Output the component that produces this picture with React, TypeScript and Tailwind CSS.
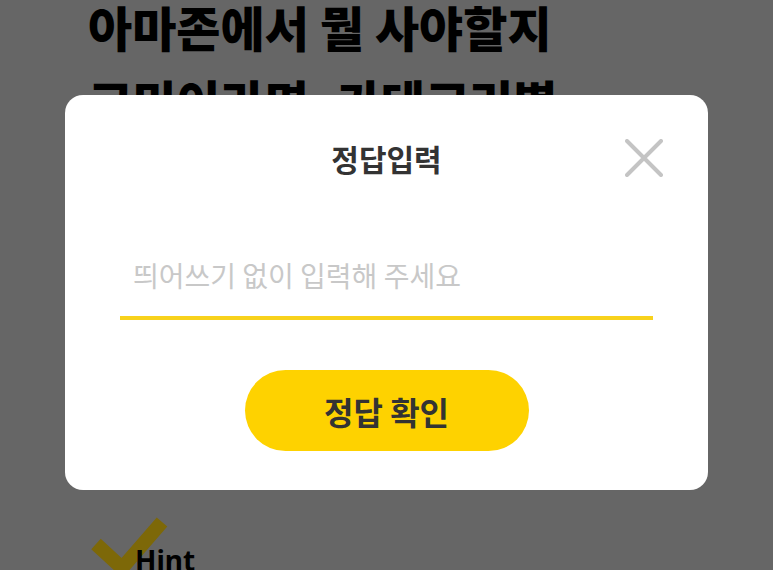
import React from "react";

const KR = { fontFamily: '"Noto Sans CJK KR", "Noto Sans", sans-serif' };

export default function App() {
  return (
    <div className="relative w-[773px] h-[570px] overflow-hidden bg-[#666666]" style={KR}>
      {/* background page */}
      <div className="pl-[88px] -mt-[11px]">
        <h1 className="text-[48px] leading-[74px] font-black text-black">
          아마존에서 뭘 사야할지
          <br />
          고민이라면, 카테고리별
        </h1>
      </div>
      <div className="absolute left-[88px] top-[512px] flex items-start">
        <svg width="80" height="70" viewBox="0 0 80 70" className="absolute left-0 top-0">
          <polyline points="8,32 34,56 74,10" fill="none" stroke="#7d6808" strokeWidth="14" />
        </svg>
        <span className="relative ml-[47px] mt-[32px] text-[28px] leading-[32px] font-bold text-black" style={{ fontFamily: '"Noto Sans", sans-serif' }}>
          Hint
        </span>
      </div>

      {/* modal */}
      <div className="absolute left-[65px] top-[95px] w-[643px] h-[395px] rounded-[18px] bg-white flex flex-col items-center">
        <div className="mt-[43px] h-[40px] text-[30px] leading-[40px] font-bold text-[#333333]">정답입력</div>
        <button className="absolute right-[45px] top-[44px] w-[38px] h-[38px]">
          <svg width="38" height="38" viewBox="0 0 38 38">
            <path d="M2 2 L36 36 M36 2 L2 36" stroke="#c4c4c4" strokeWidth="4" strokeLinecap="round" />
          </svg>
        </button>
        <div className="mt-[72px] w-[533px] border-b-4 border-[#f8d21c] pb-[16px]">
          <div className="h-[50px] pl-[13px] flex items-center text-[28px] text-[#c8c8c8]">
            띄어쓰기 없이 입력해 주세요
          </div>
        </div>
        <button className="mt-[50px] w-[284px] h-[81px] rounded-full bg-[#fed200] text-[32px] font-bold text-[#333333] flex items-center justify-center">
          정답 확인
        </button>
      </div>
    </div>
  );
}
